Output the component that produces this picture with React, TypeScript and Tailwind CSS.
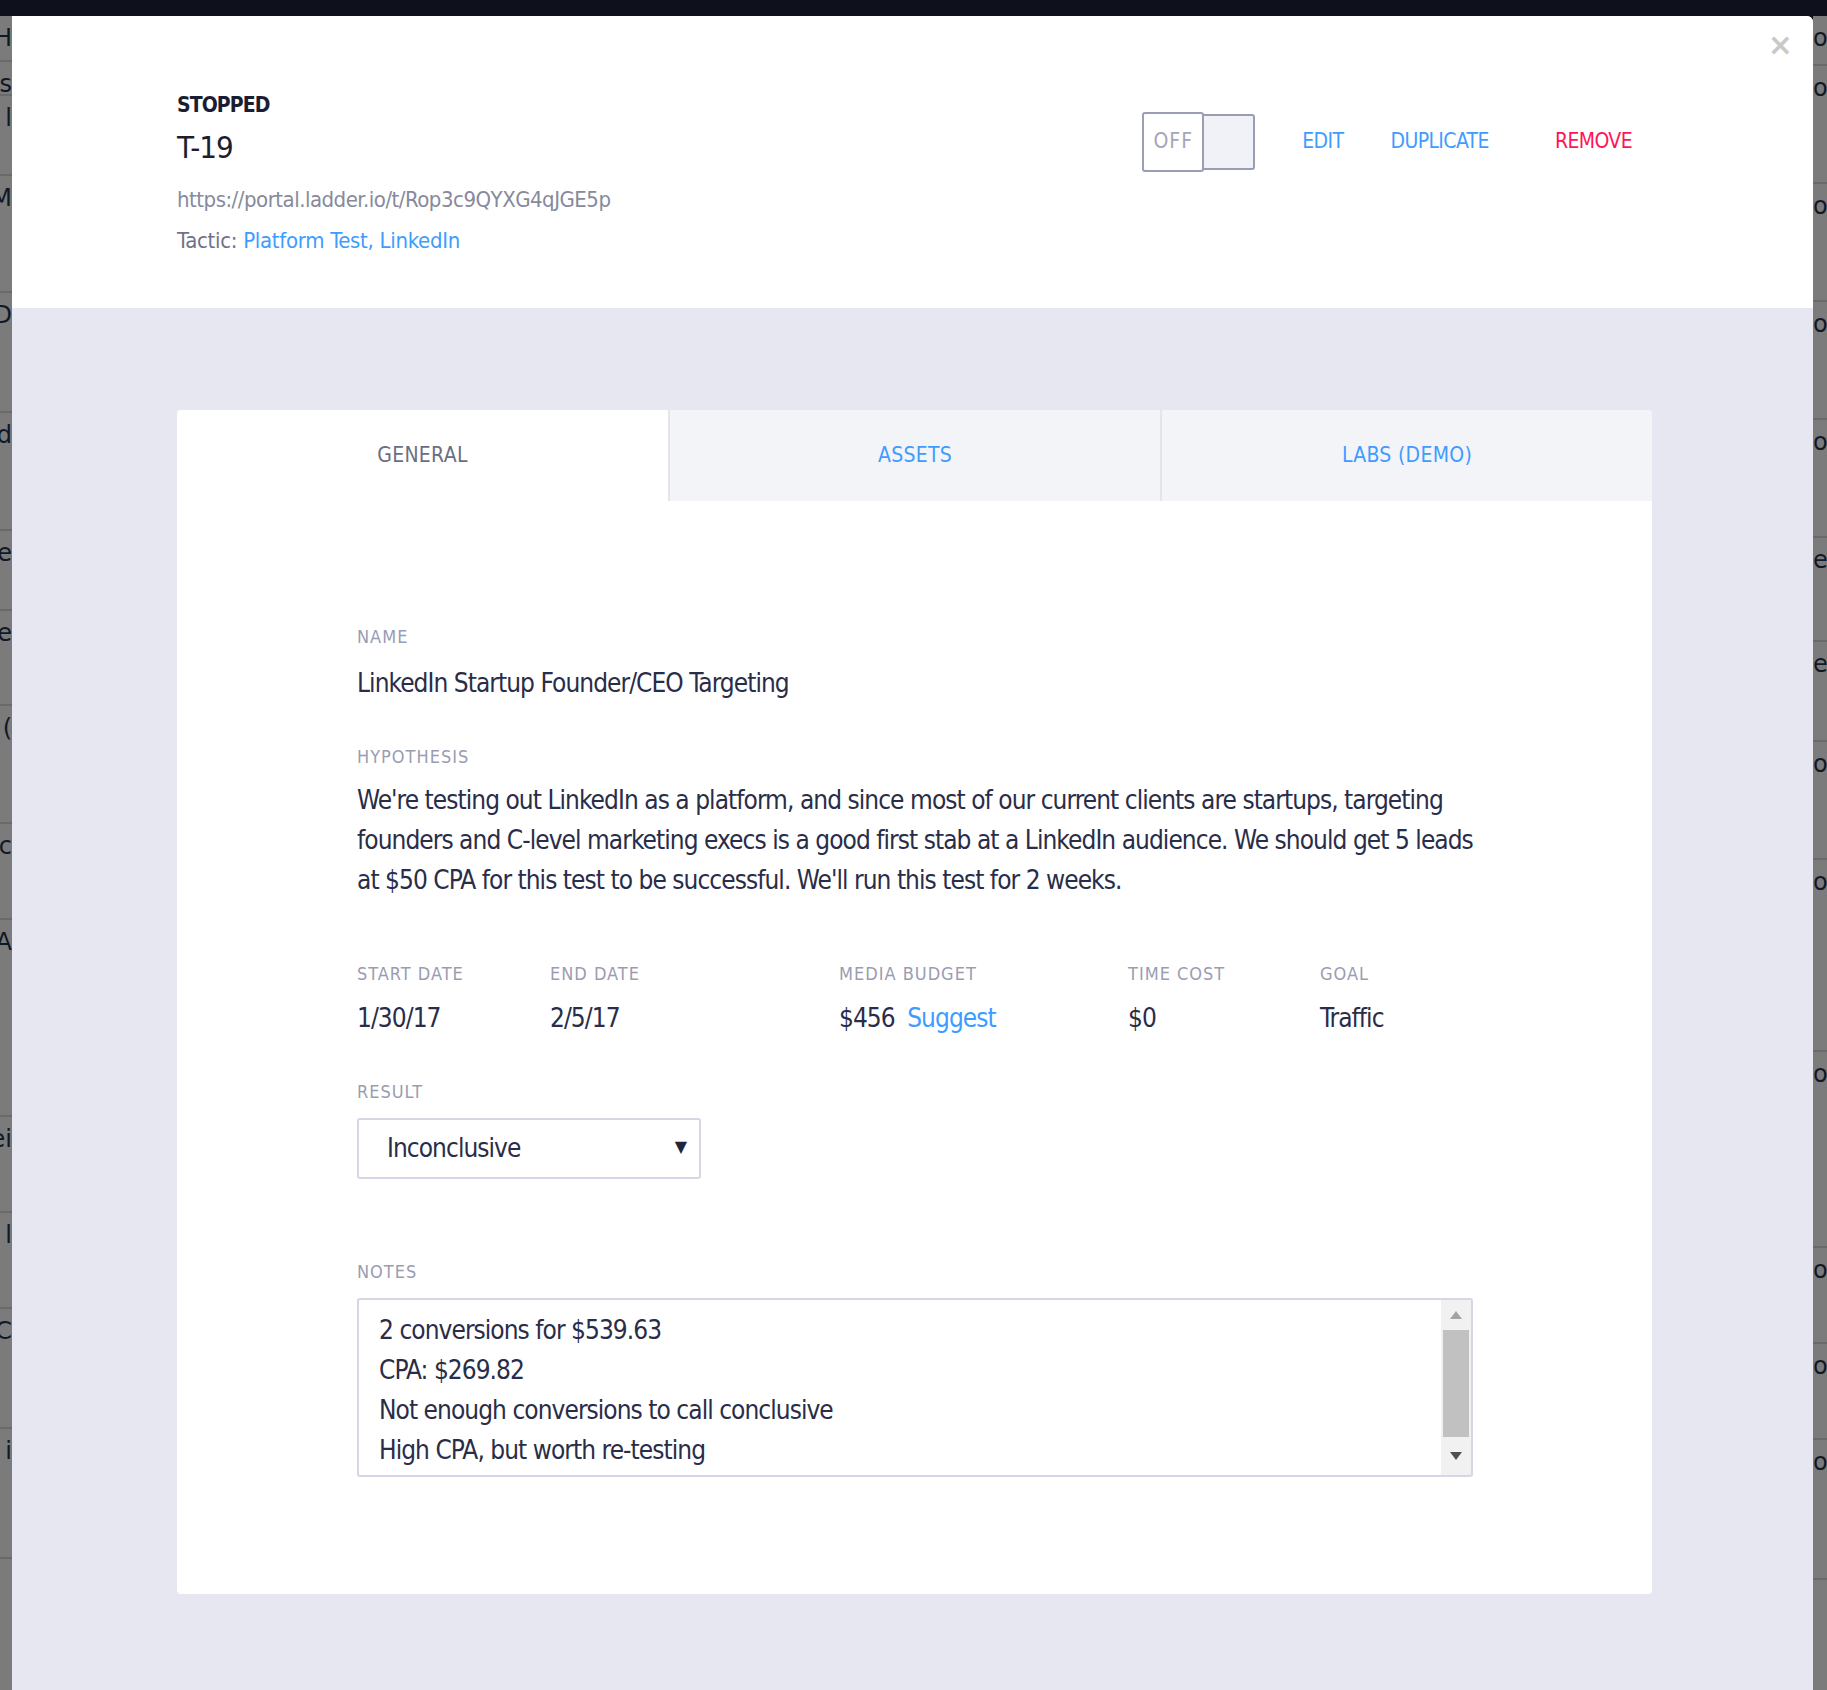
import React from "react";

// fragments of the page behind the modal overlay
const LEFT_ROWS = [
  { h: 46, t: "H" },
  { h: 34, t: "s" },
  { h: 80, t: "k l" },
  { h: 117, t: "M" },
  { h: 120, t: "-D" },
  { h: 118, t: "ed" },
  { h: 80, t: "le" },
  { h: 95, t: "ke" },
  { h: 118, t: "u (" },
  { h: 96, t: "oc" },
  { h: 197, t: "A" },
  { h: 96, t: "ei" },
  { h: 96, t: "l l" },
  { h: 120, t: "C" },
  { h: 130, t: "i" },
];

const RIGHT_ROWS = [
  { h: 50, t: "o" },
  { h: 118, t: "o" },
  { h: 118, t: "o" },
  { h: 118, t: "o" },
  { h: 118, t: "or" },
  { h: 104, t: "eg" },
  { h: 100, t: "eg" },
  { h: 118, t: "or" },
  { h: 192, t: "o" },
  { h: 196, t: "o" },
  { h: 96, t: "o" },
  { h: 96, t: "o" },
  { h: 140, t: "or" },
];

const NOTES = [
  "2 conversions for $539.63",
  "CPA: $269.82",
  "Not enough conversions to call conclusive",
  "High CPA, but worth re-testing",
];

function Label({ children }: { children: React.ReactNode }) {
  return (
    <div className="text-[18px] leading-[22px] tracking-[1px] uppercase text-[#9a9cb2]">
      {children}
    </div>
  );
}

function Value({ children }: { children: React.ReactNode }) {
  return <div className="text-[26px] leading-[34px] tracking-[-0.95px] mt-[16px]">{children}</div>;
}

function Strip({ rows, side }: { rows: { h: number; t: string }[]; side: "left" | "right" }) {
  return (
    <div
      className={
        side === "left"
          ? "w-[12px] shrink-0 overflow-hidden bg-[#7b7b7b] flex flex-col"
          : "w-[14px] shrink-0 overflow-hidden bg-[#7b7b7b] flex flex-col"
      }
    >
      {rows.map((r, i) => (
        <div
          key={i}
          style={{ height: r.h }}
          className={
            side === "left"
              ? "border-b-2 border-[#6a6a6a] flex justify-end pt-2 text-[24px] leading-[28px] text-[#111827] font-['DejaVu_Sans',sans-serif] whitespace-nowrap"
              : "border-b-2 border-[#6a6a6a] flex justify-start pt-2 text-[24px] leading-[28px] text-[#111827] font-['DejaVu_Sans',sans-serif] whitespace-nowrap"
          }
        >
          {r.t}
        </div>
      ))}
    </div>
  );
}

export default function App() {
  return (
    <div className="w-[1827px] h-[1690px] overflow-hidden bg-[#0e111b] flex flex-col font-['Liberation_Sans_Narrow','DejaVu_Sans_Condensed',sans-serif]">
      <div className="h-[16px] shrink-0" />
      <div className="flex flex-1 min-h-0">
        <Strip rows={LEFT_ROWS} side="left" />

        {/* Modal */}
        <div className="flex-1 flex flex-col bg-[#e6e7f0] rounded-tr-[6px] overflow-hidden">
          {/* Header */}
          <div className="h-[292px] shrink-0 bg-white relative flex justify-between pl-[165px] pr-[181px] pt-[75px]">
            <div className="flex flex-col">
              <div className="text-[21px] leading-[28px] font-bold tracking-[-0.9px] text-[#1b1e31]">STOPPED</div>
              <div className="text-[31px] leading-[40px] tracking-[-1px] mt-[8px] text-[#1b1e31]">T-19</div>
              <div className="text-[22px] leading-[30px] tracking-[-0.5px] mt-[18px] text-[#878a9c]">
                https://portal.ladder.io/t/Rop3c9QYXG4qJGE5p
              </div>
              <div className="text-[22px] leading-[30px] tracking-[-0.3px] mt-[11px] text-[#6f7287]">
                Tactic: <span className="text-[#3f9cff]">Platform Test, LinkedIn</span>
              </div>
            </div>

            <div className="flex items-start pt-[21px]">
              <div className="flex items-center h-[60px]">
                <div className="w-[62px] h-[60px] border-2 border-[#9a9eb5] rounded-[3px] bg-white flex items-center justify-center text-[21px] tracking-[1px] text-[#a3a6b8] z-10">
                  OFF
                </div>
                <div className="w-[53px] h-[56px] -ml-[2px] border-2 border-[#9a9eb5] rounded-r-[3px] bg-[#f1f2f7]" />
              </div>
              <div className="flex items-center h-[60px] ml-[47px] text-[21px] tracking-[-0.6px]">
                <span className="text-[#3f9cff]">EDIT</span>
                <span className="text-[#3f9cff] ml-[47px]">DUPLICATE</span>
                <span className="text-[#ff1458] ml-[66px]">REMOVE</span>
              </div>
            </div>

            <div className="absolute right-[20px] top-[14px] text-[30px] leading-[30px] font-bold text-[#c9c9c9] font-['DejaVu_Sans',sans-serif]">
              ×
            </div>
          </div>

          {/* Body */}
          <div className="flex-1 pl-[165px] pr-[161px] pt-[102px]">
            <div className="bg-white rounded-[4px] h-[1184px] flex flex-col">
              {/* Tabs */}
              <div className="flex h-[91px] shrink-0 text-[21px] tracking-[0.3px]">
                <div className="w-[491px] flex items-center justify-center text-[#6b6e82] bg-white rounded-tl-[4px]">
                  GENERAL
                </div>
                <div className="w-[492px] flex items-center justify-center text-[#3f9cff] bg-[#f3f4f8] border-l-2 border-[#e3e4ec]">
                  ASSETS
                </div>
                <div className="flex-1 flex items-center justify-center text-[#3f9cff] bg-[#f3f4f8] border-l-2 border-[#e3e4ec] rounded-tr-[4px]">
                  LABS (DEMO)
                </div>
              </div>

              {/* Form */}
              <div className="pl-[180px] pr-[100px] pt-[125px] flex flex-col text-[#2a2d48]">
                <Label>NAME</Label>
                <div className="text-[26px] leading-[34px] tracking-[-0.95px] mt-[18px]">
                  LinkedIn Startup Founder/CEO Targeting
                </div>

                <div className="mt-[46px]">
                  <Label>HYPOTHESIS</Label>
                </div>
                <div className="text-[26px] leading-[40px] tracking-[-0.95px] mt-[12px] w-[1128px]">
                  We're testing out LinkedIn as a platform, and since most of our current clients are startups, targeting
                  founders and C-level marketing execs is a good first stab at a LinkedIn audience. We should get 5 leads
                  at $50 CPA for this test to be successful. We'll run this test for 2 weeks.
                </div>

                <div className="flex mt-[63px]">
                  <div className="w-[193px] flex flex-col">
                    <Label>START DATE</Label>
                    <Value>1/30/17</Value>
                  </div>
                  <div className="w-[289px] flex flex-col">
                    <Label>END DATE</Label>
                    <Value>2/5/17</Value>
                  </div>
                  <div className="w-[289px] flex flex-col">
                    <Label>MEDIA BUDGET</Label>
                    <Value>
                      $456 <span className="ml-[6px] text-[#3f9cff]">Suggest</span>
                    </Value>
                  </div>
                  <div className="w-[192px] flex flex-col">
                    <Label>TIME COST</Label>
                    <Value>$0</Value>
                  </div>
                  <div className="flex flex-col">
                    <Label>GOAL</Label>
                    <Value>Traffic</Value>
                  </div>
                </div>

                <div className="mt-[46px]">
                  <Label>RESULT</Label>
                </div>
                <div className="mt-[15px] w-[344px] h-[61px] border-2 border-[#d6d7e6] rounded-[3px] flex items-center justify-between pl-[28px] pr-[12px]">
                  <span className="text-[26px] tracking-[-0.95px]">Inconclusive</span>
                  <span className="text-[16px] text-[#22253a] font-['DejaVu_Sans',sans-serif] -mt-[4px]">▼</span>
                </div>

                <div className="mt-[82px]">
                  <Label>NOTES</Label>
                </div>
                <div className="mt-[15px] w-[1116px] h-[179px] border-2 border-[#d6d7e6] rounded-[3px] flex">
                  <div className="flex-1 pl-[20px] pt-[10px] text-[26px] leading-[40px] tracking-[-0.95px]">
                    {NOTES.map((n) => (
                      <div key={n}>{n}</div>
                    ))}
                  </div>
                  <div className="w-[30px] bg-[#f1f1f1] flex flex-col items-center">
                    <div className="h-[30px] flex items-center justify-center">
                      <svg width="12" height="8" viewBox="0 0 12 8">
                        <path d="M6 0 L12 8 L0 8 Z" fill="#a3a3a3" />
                      </svg>
                    </div>
                    <div className="w-[26px] h-[107px] bg-[#c1c1c1]" />
                    <div className="flex-1 flex items-center justify-center">
                      <svg width="12" height="8" viewBox="0 0 12 8">
                        <path d="M0 0 L12 0 L6 8 Z" fill="#505050" />
                      </svg>
                    </div>
                  </div>
                </div>
              </div>
            </div>
          </div>
        </div>

        <Strip rows={RIGHT_ROWS} side="right" />
      </div>
    </div>
  );
}
